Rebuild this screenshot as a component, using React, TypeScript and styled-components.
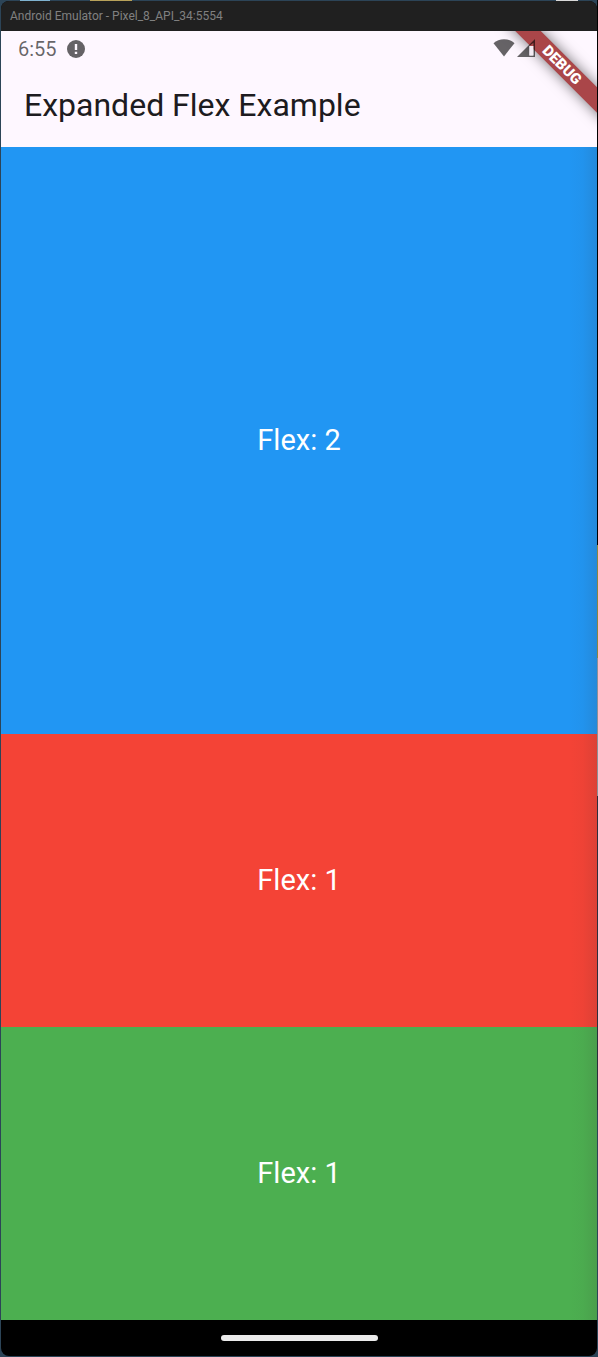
import React from "react";
import styled, { createGlobalStyle } from "styled-components";

const GlobalStyle = createGlobalStyle`
  * { box-sizing: border-box; }
  body { margin: 0; background: #2c4457; font-family: Roboto, sans-serif; }
`;

const Desktop = styled.div`
  height: 100vh;
  padding: 1px;
  display: flex;
  background:
    linear-gradient(#d9d9d9, #d9d9d9) 556px 0 / 22px 1px no-repeat,
    linear-gradient(#b9a25a, #b9a25a) 90px 0 / 42px 1px no-repeat,
    linear-gradient(#7fb2cf, #7fb2cf) 20px 0 / 30px 1px no-repeat,
    linear-gradient(#000 0 545px, #8a8540 545px 658px, #8c8f96 658px 796px, #2b2f3c 796px 1110px, #2c4457 1110px) 100% 0 / 1px 100% no-repeat,
    #2c4457;
`;

const EmulatorWindow = styled.div`
  flex: 1;
  min-width: 0;
  display: flex;
  flex-direction: column;
  border-radius: 8px;
  overflow: hidden;
  background: #000;
`;

const TitleBar = styled.header`
  flex: none;
  height: 30px;
  padding: 0 9px;
  display: flex;
  align-items: center;
  background: #202020;
  color: #808080;
  font-size: 12px;
  line-height: 16px;
`;

const Screen = styled.div`
  position: relative;
  flex: 1;
  min-height: 0;
  display: flex;
  flex-direction: column;
  overflow: hidden;
  background: #fef7ff;
`;

const StatusBar = styled.div`
  position: relative;
  z-index: 1;
  flex: none;
  height: 36px;
  padding: 0 62px 0 17px;
  display: flex;
  align-items: center;
  justify-content: space-between;
  color: rgba(0, 0, 0, 0.6);
  font-size: 20px;
  line-height: 24px;
`;

const StatusGroup = styled.div<{ $gap: number }>`
  display: flex;
  align-items: center;
  gap: ${(p) => p.$gap}px;
`;

const Icon = styled.svg`
  display: block;
`;

const AppBar = styled.div`
  flex: none;
  height: 80px;
  padding: 0 23px 4px;
  display: flex;
  align-items: center;
`;

const AppTitle = styled.h1`
  margin: 0;
  color: #1d1b20;
  font-size: 32px;
  line-height: 40px;
  font-weight: 400;
`;

const Body = styled.main`
  position: relative;
  flex: 1;
  min-height: 0;
  display: flex;
  flex-direction: column;

  &::after {
    content: "";
    position: absolute;
    top: 0;
    right: 0;
    bottom: 0;
    width: 28px;
    background: linear-gradient(to right, transparent, rgba(60, 50, 50, 0.03) 50%, rgba(60, 50, 50, 0.13));
  }
`;

const Panel = styled.section<{ $flex: number; $color: string }>`
  flex: ${(p) => p.$flex} 1 0;
  display: flex;
  align-items: center;
  justify-content: center;
  background: ${(p) => p.$color};
  color: #fff;
  font-size: 29px;
  line-height: 40px;
`;

const NavigationBar = styled.footer`
  flex: none;
  height: 36px;
  display: flex;
  align-items: center;
  justify-content: center;
`;

const HomeHandle = styled.div`
  width: 157px;
  height: 6px;
  border-radius: 3px;
  background: #ebebeb;
`;

const DebugBanner = styled.div`
  position: absolute;
  top: 25px;
  right: -35px;
  width: 140px;
  height: 18px;
  transform: rotate(45deg);
  background: #aa4649;
  box-shadow: 0 0 14px rgba(0, 0, 0, 0.55);
  color: #fff;
  font-size: 15px;
  line-height: 18px;
  font-weight: 900;
  text-align: center;
`;

const panels = [
  { flex: 2, color: "#2196f3" },
  { flex: 1, color: "#f44336" },
  { flex: 1, color: "#4caf50" },
];

export default function App() {
  return (
    <Desktop>
      <GlobalStyle />
      <EmulatorWindow>
        <TitleBar>Android Emulator - Pixel_8_API_34:5554</TitleBar>
        <Screen>
          <StatusBar>
            <StatusGroup $gap={10}>
              <span>6:55</span>
              <Icon width="18" height="18" viewBox="0 0 18 18" aria-label="Alert">
                <circle cx="9" cy="9" r="9" fill="#656266" />
                <path d="M7.8 4h2.4v6H7.8zM7.8 11.7h2.4V14H7.8z" fill="#fef7ff" />
              </Icon>
            </StatusGroup>
            <StatusGroup $gap={2}>
              <Icon width="22" height="20" viewBox="0 0 22 20" aria-label="Wi-Fi">
                <path d="M.5 4.2C6-1.2 16-1.2 21.5 4.2L11 17.4z" fill="currentColor" />
              </Icon>
              <Icon width="18" height="20" viewBox="0 0 18 20" aria-label="Mobile signal">
                <path fillRule="evenodd" d="M18 0v18H0zM12.4 7v9.4h4V3.8z" fill="currentColor" />
                <path d="M12.4 7v9.4h4V7z" fill="#f2ebf3" />
              </Icon>
            </StatusGroup>
          </StatusBar>
          <AppBar>
            <AppTitle>Expanded Flex Example</AppTitle>
          </AppBar>
          <Body>
            {panels.map((p, i) => (
              <Panel key={i} $flex={p.flex} $color={p.color}>
                Flex: {p.flex}
              </Panel>
            ))}
          </Body>
          <DebugBanner>DEBUG</DebugBanner>
        </Screen>
        <NavigationBar>
          <HomeHandle />
        </NavigationBar>
      </EmulatorWindow>
    </Desktop>
  );
}
